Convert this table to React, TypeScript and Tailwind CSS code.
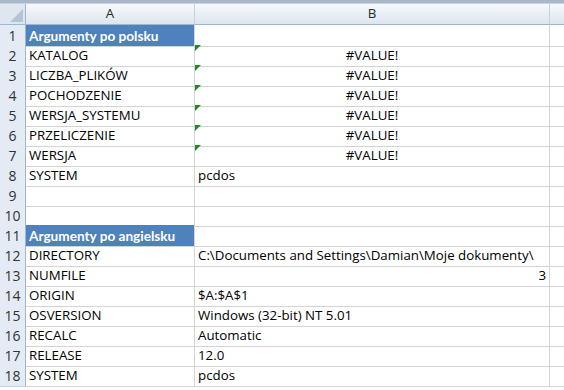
import React from "react";

type Row = { a: string; b: string; bAlign?: "left" | "center" | "right"; head?: boolean; tri?: boolean };

const rows: Row[] = [
  { a: "Argumenty po polsku", b: "", head: true },
  { a: "KATALOG", b: "#VALUE!", bAlign: "center", tri: true },
  { a: "LICZBA_PLIKÓW", b: "#VALUE!", bAlign: "center", tri: true },
  { a: "POCHODZENIE", b: "#VALUE!", bAlign: "center", tri: true },
  { a: "WERSJA_SYSTEMU", b: "#VALUE!", bAlign: "center", tri: true },
  { a: "PRZELICZENIE", b: "#VALUE!", bAlign: "center", tri: true },
  { a: "WERSJA", b: "#VALUE!", bAlign: "center", tri: true },
  { a: "SYSTEM", b: "pcdos" },
  { a: "", b: "" },
  { a: "", b: "" },
  { a: "Argumenty po angielsku", b: "", head: true },
  { a: "DIRECTORY", b: "C:\\Documents and Settings\\Damian\\Moje dokumenty\\" },
  { a: "NUMFILE", b: "3", bAlign: "right" },
  { a: "ORIGIN", b: "$A:$A$1" },
  { a: "OSVERSION", b: "Windows (32-bit) NT 5.01" },
  { a: "RECALC", b: "Automatic" },
  { a: "RELEASE", b: "12.0" },
  { a: "SYSTEM", b: "pcdos" },
];

const font = { fontFamily: '"Open Sans", "Noto Sans", sans-serif' };
const boldFont = { fontFamily: 'Lato, "Open Sans", sans-serif' };

export default function App() {
  return (
    <div className="w-[564px] h-[390px] overflow-hidden bg-white text-[13.3px] text-black" style={font}>
      <div className="h-[4px] bg-[#aab7c9] border-b border-[#c9d3e0]" />
      <div className="grid grid-cols-[26px_169px_355px_1fr] h-[21px]">
        <div className="relative border-r border-b border-[#9eb6ce] bg-[#dfe6ef]">
          <div className="absolute right-[2px] bottom-[2px] w-0 h-0 border-l-[13px] border-l-transparent border-b-[13px] border-b-[#b5c3d6]" />
        </div>
        <div className="flex items-center justify-center border-r border-b border-r-[#c5d1de] border-b-[#9eb6ce] bg-gradient-to-b from-[#f7f9fc] to-[#dde5ee] text-[#27292b]">A</div>
        <div className="flex items-center justify-center border-r border-b border-r-[#c5d1de] border-b-[#9eb6ce] bg-gradient-to-b from-[#f7f9fc] to-[#dde5ee] text-[#27292b]">B</div>
        <div className="border-b border-[#9eb6ce] bg-gradient-to-b from-[#f7f9fc] to-[#dde5ee]" />
      </div>
      {rows.map((r, i) => (
        <div key={i} className="grid grid-cols-[26px_169px_355px_1fr] h-[20px]">
          <div className="flex items-center justify-center border-r border-b border-r-[#9eb6ce] border-b-[#c5d1de] bg-[#e4ebf5] text-[#303234] text-[14px]">
            {i + 1}
          </div>
          {r.head ? (
            <div
              className="flex items-center pl-[3px] pt-[1px] border-r border-b border-[#d4d4d4] bg-[#4f81bd] text-white font-bold text-[13.6px] whitespace-nowrap"
              style={boldFont}
            >
              {r.a}
            </div>
          ) : (
            <div className="flex items-center pl-[3px] pt-[1px] border-r border-b border-[#d4d4d4] whitespace-nowrap">
              {r.a}
            </div>
          )}
          <div
            className={
              "relative flex items-center pt-[1px] border-r border-b border-[#d4d4d4] whitespace-nowrap " +
              (r.bAlign === "center"
                ? "justify-center"
                : r.bAlign === "right"
                ? "justify-end pr-[3px]"
                : "pl-[3px]")
            }
          >
            {r.tri && (
              <div className="absolute left-0 top-0 w-0 h-0 border-t-[6px] border-t-[#1e8c1e] border-r-[6px] border-r-transparent" />
            )}
            {r.b}
          </div>
          <div className="border-b border-[#d4d4d4]" />
        </div>
      ))}
    </div>
  );
}
